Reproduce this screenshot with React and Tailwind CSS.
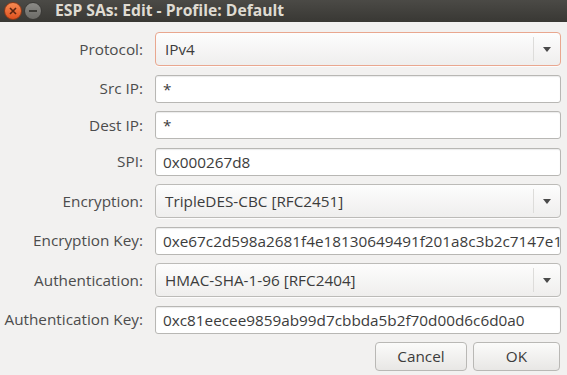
import { useState } from "react";

const rows = [
  { label: "Protocol:", kind: "combo", value: "IPv4", focused: true },
  { label: "Src IP:", kind: "entry", value: "*" },
  { label: "Dest IP:", kind: "entry", value: "*" },
  { label: "SPI:", kind: "entry", value: "0x000267d8" },
  { label: "Encryption:", kind: "combo", value: "TripleDES-CBC [RFC2451]" },
  { label: "Encryption Key:", kind: "entry", value: "0xe67c2d598a2681f4e18130649491f201a8c3b2c7147e1c30" },
  { label: "Authentication:", kind: "combo", value: "HMAC-SHA-1-96 [RFC2404]" },
  { label: "Authentication Key:", kind: "entry", value: "0xc81eecee9859ab99d7cbbda5b2f70d00d6c6d0a0" },
];

function Combo({ value, focused }) {
  return (
    <div
      className={
        focused
          ? "flex h-[34px] items-center rounded-[4px] border border-[#e9a78f] bg-gradient-to-b from-[#fdfdfd] to-[#efeeed] shadow-[0_1px_0_rgba(255,255,255,0.8)]"
          : "flex h-[34px] items-center rounded-[4px] border border-[#bcbbb8] bg-gradient-to-b from-[#fdfdfd] to-[#efeeed] shadow-[0_1px_0_rgba(255,255,255,0.8)]"
      }
    >
      <span className="flex-1 truncate pl-[9px] text-[15.3px] text-[#3c3c3c]">{value}</span>
      <span className="h-[24px] w-px bg-[#dddcda]" />
      <span className="flex w-[26px] justify-center">
        <svg width="8" height="5" viewBox="0 0 8 5">
          <path d="M0 0 L8 0 L4 5 Z" fill="#4a4a4a" />
        </svg>
      </span>
    </div>
  );
}

function Entry({ value }) {
  const [text, setText] = useState(value);
  return (
    <input
      className="h-[28px] w-full rounded-[3px] border border-[#b8b7b4] bg-white pl-[7px] text-[15.3px] text-[#3c3c3c] shadow-[inset_0_1px_1px_rgba(0,0,0,0.08)] outline-none"
      value={text}
      onChange={(event) => setText(event.target.value)}
    />
  );
}

export default function App() {
  return (
    <div
      className="h-[375px] w-[567px] overflow-hidden bg-[#f2f1f0]"
      style={{ fontFamily: '"Open Sans", "DejaVu Sans", sans-serif' }}
    >
      <div className="flex h-[22px] items-center bg-gradient-to-b from-[#4b4a46] to-[#393834] pl-[4px]">
        <span className="flex h-[18px] w-[18px] items-center justify-center rounded-full border border-[#8a3a1a] bg-gradient-to-b from-[#f68a52] to-[#e0501c]">
          <svg width="8" height="8" viewBox="0 0 8 8">
            <path d="M1 1 L7 7 M7 1 L1 7" stroke="#5a2410" strokeWidth="1.6" />
          </svg>
        </span>
        <span className="ml-[2px] flex h-[18px] w-[18px] items-center justify-center rounded-full border border-[#3a3936] bg-gradient-to-b from-[#8c8b87] to-[#6c6b67]">
          <span className="h-[2px] w-[8px] bg-[#3d3c38]" />
        </span>
        <span className="ml-[13px] text-[15.7px] font-bold text-[#dfdbd2]">
          ESP SAs: Edit - Profile: Default
        </span>
      </div>

      <div className="grid grid-cols-[143px_1fr] items-center gap-x-[12px] gap-y-[8.5px] pr-[6px] pt-[10px]">
        {rows.map((row) => (
          <div key={row.label} className="contents">
            <span className="whitespace-nowrap text-right text-[15.3px] text-[#4c4c4c]">{row.label}</span>
            {row.kind === "combo" ? (
              <Combo value={row.value} focused={row.focused} />
            ) : (
              <Entry value={row.value} />
            )}
          </div>
        ))}
        <div />
        <div className="flex justify-end gap-[6px] pr-px">
          <button className="h-[29px] w-[92px] rounded-[4px] border border-[#b9b8b5] bg-gradient-to-b from-[#fbfbfa] to-[#e8e7e5] text-[15.3px] text-[#3c3c3c]">
            Cancel
          </button>
          <button className="h-[29px] w-[87px] rounded-[4px] border border-[#b9b8b5] bg-gradient-to-b from-[#fbfbfa] to-[#e8e7e5] text-[15.3px] text-[#3c3c3c]">
            OK
          </button>
        </div>
      </div>
    </div>
  );
}
